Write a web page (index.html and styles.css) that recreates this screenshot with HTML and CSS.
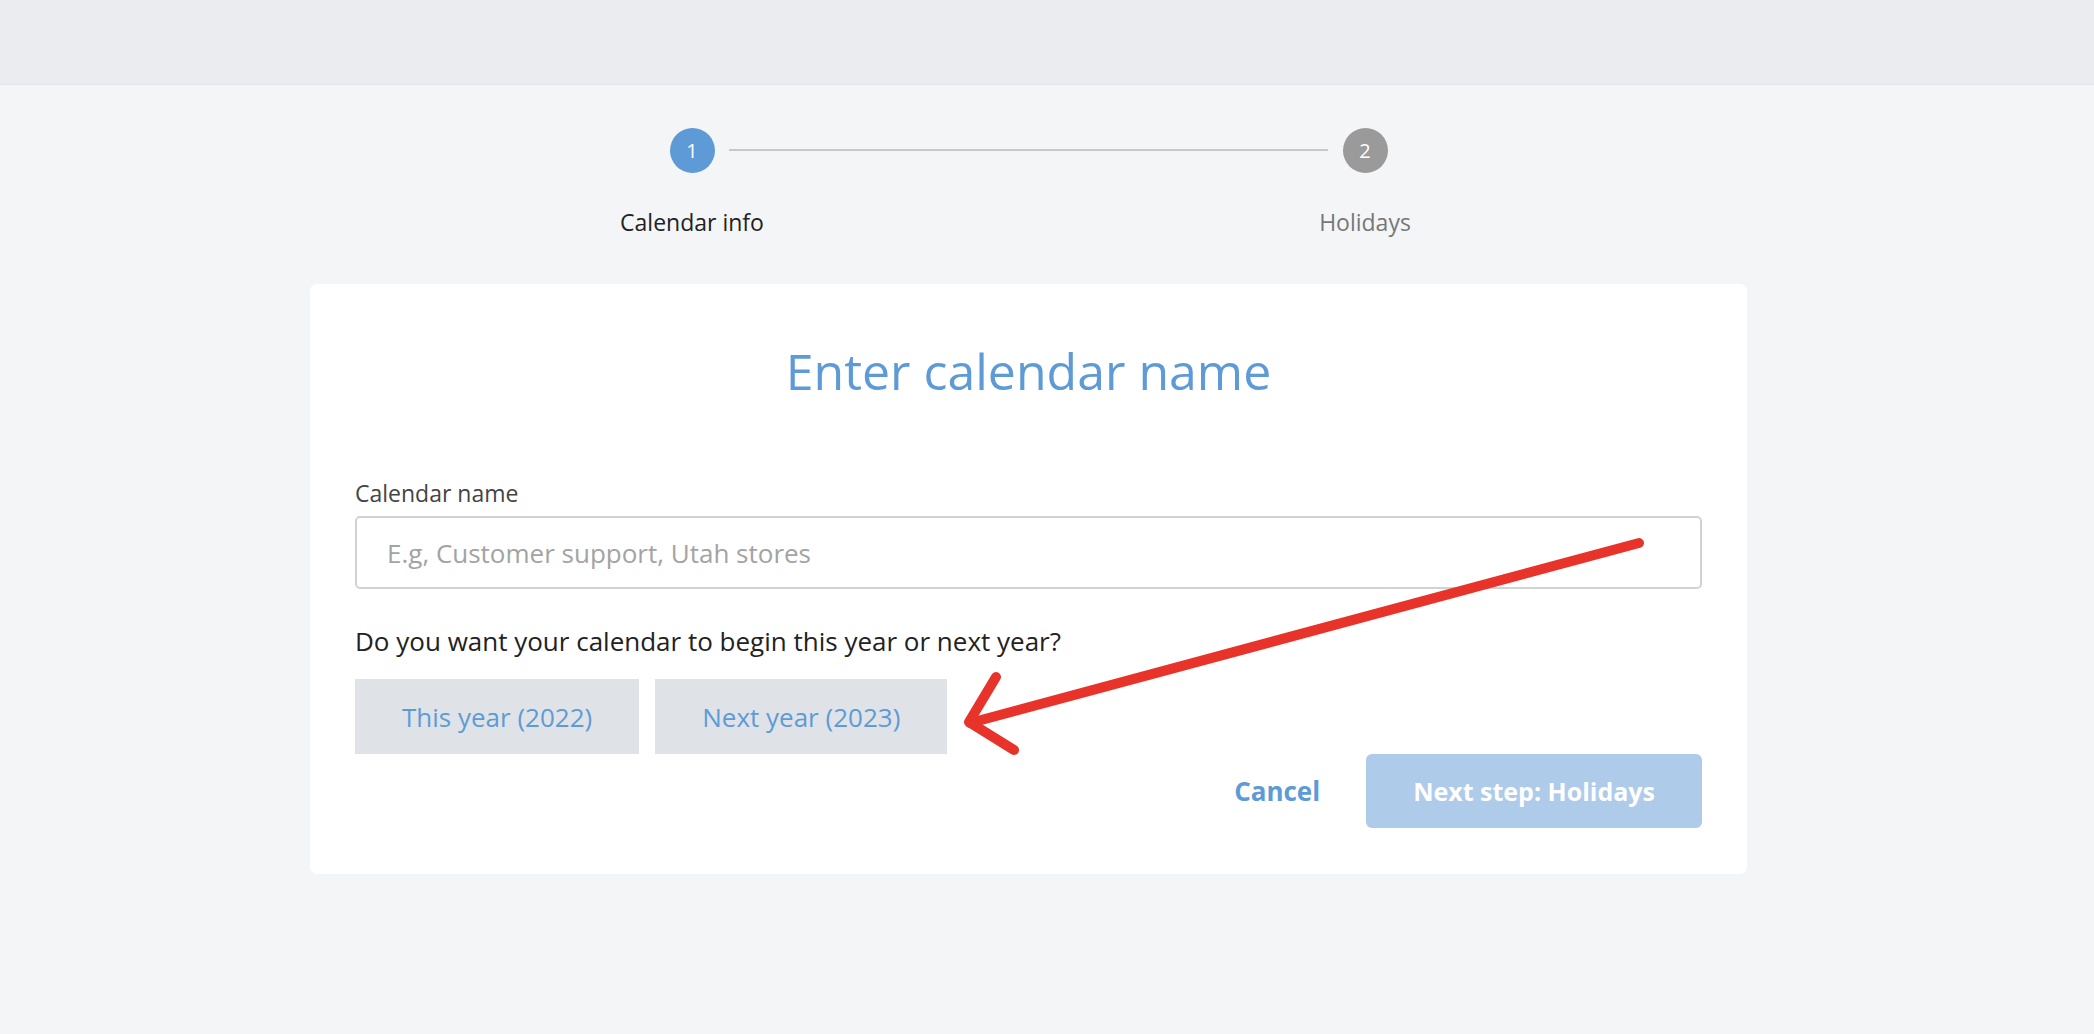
FILE: index.html
```html
<!DOCTYPE html>
<html lang="en">
<head>
    <meta charset="UTF-8">
    <meta name="viewport" content="width=device-width, initial-scale=1.0">
    <title>New Calendar</title>
    <link rel="stylesheet" href="styles.css">
</head>
<body>
    <div class="topbar"></div> <!-- Empty app header strip -->

    <div class="main">
        <div class="steps">
            <div class="step">
                <span class="step-num active">1</span>
                <span class="step-label active">Calendar info</span>
            </div>
            <div class="step-line"></div>
            <div class="step">
                <span class="step-num">2</span>
                <span class="step-label">Holidays</span>
            </div>
        </div>

        <div class="card">
            <h1 class="card-title">Enter calendar name</h1>

            <label for="calendarName">Calendar name</label>
            <input type="text" id="calendarName" name="calendarName" placeholder="E.g, Customer support, Utah stores">

            <p class="question">Do you want your calendar to begin this year or next year?</p>
            <div class="year-options">
                <button class="year-btn">This year (2022)</button>
                <button class="year-btn">Next year (2023)</button>
            </div>

            <div class="actions">
                <a class="cancel" href="#">Cancel</a>
                <button class="next-btn" disabled>Next step: Holidays</button>
            </div>
        </div>
    </div>

    <!-- Red annotation arrow drawn over the screenshot -->
    <svg class="annotation" width="2094" height="1034" viewBox="0 0 2094 1034">
        <path d="M1639 543 L970 723" />
        <path d="M996 677 L969 722 L1014 750" />
    </svg>
</body>
</html>
```

FILE: styles.css
```css
body {
    font-family: "Open Sans", Arial, sans-serif;
    margin: 0;
    padding: 0;
    background-color: #f4f5f7;
    color: #222;
    position: relative;
    min-height: 100vh;
}

.topbar {
    height: 84px;
    background-color: #ebecf0;
    border-bottom: 1px solid #e3e4e8;
}

.main {
    padding-right: 37px; /* content column sits a little left of centre */
}

.steps {
    display: flex;
    width: 747px;
    margin: 43px auto 0;
}

.step {
    width: 74px;
    display: flex;
    flex-direction: column;
    align-items: center;
}

.step-num {
    width: 45px;
    height: 45px;
    border-radius: 50%;
    background-color: #9a9a9a;
    color: white;
    font-size: 20px;
    line-height: 45px;
    text-align: center;
}

.step-num.active {
    background-color: #5e9bd6;
}

.step-label {
    margin-top: 34px;
    font-size: 23px;
    line-height: 30px;
    white-space: nowrap;
    color: #777;
}

.step-label.active {
    color: #222;
}

.step-line {
    flex: 1;
    height: 2px;
    margin-top: 21px;
    background-color: #c8c8c8;
}

.card {
    max-width: 1347px;
    margin: 47px auto 0;
    padding: 45px 45px 46px;
    background-color: #fff;
    border-radius: 7px;
}

.card-title {
    margin: 12px 0 0;
    font-size: 50px;
    font-weight: 400;
    line-height: 60px;
    text-align: center;
    color: #5e9bd6;
}

label {
    display: block;
    margin-top: 77px;
    font-size: 23px;
    line-height: 30px;
    color: #444;
}

input {
    display: block;
    width: 100%;
    height: 73px;
    margin-top: 8px;
    padding: 0 30px;
    font-family: inherit;
    font-size: 26px;
    border: 2px solid #d2d2d2;
    border-radius: 5px;
    box-sizing: border-box;
    color: #222;
}

input::placeholder {
    color: #a3a3a3;
}

.question {
    margin: 35px 0 0;
    font-size: 26px;
    line-height: 34px;
}

.year-options {
    display: flex;
    gap: 16px;
    margin-top: 21px;
}

.year-btn {
    height: 75px;
    padding: 0 47px;
    font-family: inherit;
    font-size: 26px;
    color: #5e9bd6;
    background-color: #dfe3e8;
    border: none;
    cursor: pointer;
}

.actions {
    display: flex;
    justify-content: flex-end;
    align-items: center;
    gap: 46px;
}

.cancel {
    font-size: 26px;
    font-weight: 700;
    color: #5e9bd6;
    text-decoration: none;
}

.next-btn {
    height: 74px;
    padding: 0 47px;
    font-family: inherit;
    font-size: 25px;
    font-weight: 700;
    color: white;
    background-color: #aecbea;
    border: none;
    border-radius: 6px;
}

.annotation {
    position: absolute;
    top: 0;
    left: 0;
    pointer-events: none;
    fill: none;
    stroke: #e8332a;
    stroke-width: 10;
    stroke-linecap: round;
    stroke-linejoin: round;
}
```
